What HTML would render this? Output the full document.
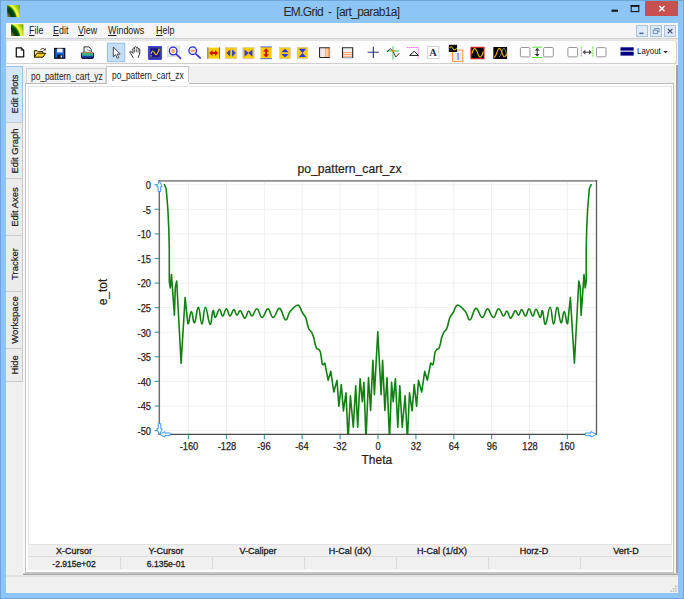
<!DOCTYPE html>
<html><head><meta charset="utf-8">
<style>
*{box-sizing:border-box;margin:0;padding:0}
html,body{width:684px;height:599px;overflow:hidden}
body{position:relative;background:#8dc6f6;font-family:"Liberation Sans",sans-serif;color:#1a1a1a}
.abs{position:absolute}
#frame{left:0;top:0;width:684px;height:599px;border:1px solid #6ea6d8}
#title{left:0;top:3.9px;width:683px;text-align:center;font-size:12px;line-height:16px;color:#262626;letter-spacing:-0.62px;word-spacing:2.2px}
#client{left:6px;top:23px;width:672px;height:570px;background:#f0f0f0}
#menubar{left:6px;top:23px;width:672px;height:16px;background:#f5f5f5}
.mi{position:absolute;top:24.2px;font-size:10.5px;line-height:13px;transform-origin:0 50%;white-space:nowrap;color:#1a1a1a}
.mi u{text-decoration:underline;text-underline-offset:0.6px;text-decoration-thickness:0.8px}
.mdi{position:absolute;top:25.2px;width:12.4px;height:12.2px;background:#dceaf9;border:1px solid #a9c4e0}
#tbsep{left:6px;top:38.3px;width:672px;height:2px;background:linear-gradient(#cfcfcf 60%,#e8e8e8 60%)}
#toolbar{left:6px;top:40.2px;width:671px;height:23.4px;background:#fdfdfd;border:1px solid #cfcfcf;border-top-color:#e4e4e4;border-left-color:#e8e8e8;border-radius:0 3px 3px 0}
.vt{position:absolute;left:6px;width:17px;background:#ececec;border:1px solid #c9c9c9;border-left:none}
.vt span{position:absolute;left:57%;top:50%;white-space:nowrap;font-size:9.5px;line-height:12px;transform:translate(-50%,-50%) rotate(-90deg);color:#1a1a1a;-webkit-text-stroke:0.2px #1a1a1a}
.vt.act{background:#d6e6f8;border-color:#9cc3ec}
.tab{position:absolute;font-size:10px;white-space:nowrap;color:#1a1a1a}
#tab1{left:26px;top:68px;width:80.3px;height:15.3px;background:#f2f2f2;border:1px solid #d2d2d2;border-bottom:none}
#tab2{left:106.3px;top:66.4px;width:83.2px;height:18px;background:#fff;border:1px solid #c8c8c8;border-bottom:none}
#panel{left:24.7px;top:83px;width:649.6px;height:490.3px;background:#fff;border:1px solid #c4c4c4;border-top-color:#bcbcbc}
#inner{left:28px;top:86px;width:644px;height:459px;border:1px solid #e3e3e3;background:#fff}
#tbl{left:28px;top:545px;width:644px;height:25px;background:#f0f0f0}
.th{position:absolute;top:545.5px;width:92px;text-align:center;font-size:9px;line-height:11px;color:#1a1a1a;-webkit-text-stroke:0.3px #1a1a1a}
.td{position:absolute;top:558.5px;width:92px;text-align:center;font-size:9px;line-height:11px;color:#1a1a1a;-webkit-text-stroke:0.3px #1a1a1a;transform:scaleX(0.945)}
.vs{position:absolute;top:557px;width:1px;height:12px;background:#dadada}
#rowsep{left:28px;top:556px;width:644px;height:1px;background:#dcdcdc}
#status{left:6px;top:575.3px;width:672px;height:17.5px;background:linear-gradient(#e3e3e3 0,#e3e3e3 1.6px,#f9f9f9 1.6px,#f9f9f9 2.4px,#f0f0f0 2.4px)}
.xl{position:absolute;top:440.3px;width:40px;text-align:center;font-size:10.5px;transform:scaleX(0.885);line-height:12px;color:#2a1c1c;-webkit-text-stroke:0.25px #2a1c1c}
.yl{position:absolute;left:110px;width:41px;text-align:right;font-size:10.5px;transform-origin:100% 50%;transform:scaleX(0.885);line-height:12px;color:#2a1c1c;-webkit-text-stroke:0.25px #2a1c1c}
#ctitle{left:249.5px;top:162px;width:200px;text-align:center;font-size:12.15px;line-height:15px;color:#2a1c14;-webkit-text-stroke:0.2px #2a1c14}
#xtitle{left:326.8px;top:453px;width:100px;text-align:center;font-size:12px;line-height:15px;color:#2a1c14;-webkit-text-stroke:0.2px #2a1c14}
#ytitle{left:103px;top:292px;font-size:12px;line-height:15px;white-space:nowrap;transform:translate(-50%,-50%) rotate(-90deg);color:#2a1c14;-webkit-text-stroke:0.2px #2a1c14}
</style></head>
<body>
<div id="frame" class="abs"></div>
<div id="title" class="abs">EM.Grid - [art_parab1a]</div>
<!--TITLEICONS-->
<div id="client" class="abs"></div>
<div id="menubar" class="abs"></div>
<div class="mi" style="left:28.7px;transform:scaleX(0.85)"><u>F</u>ile</div>
<div class="mi" style="left:52.9px;transform:scaleX(0.85)"><u>E</u>dit</div>
<div class="mi" style="left:78.4px;transform:scaleX(0.85)"><u>V</u>iew</div>
<div class="mi" style="left:108.2px;transform:scaleX(0.85)"><u>W</u>indows</div>
<div class="mi" style="left:155.6px;transform:scaleX(0.85)"><u>H</u>elp</div>
<div class="mdi" style="left:635.5px"></div>
<div class="mdi" style="left:649.7px"></div>
<div class="mdi" style="left:664px"></div>
<div id="tbsep" class="abs"></div>
<div class="abs" style="left:6px;top:64px;width:671px;height:1.6px;background:#fafafa"></div>
<div id="toolbar" class="abs"></div>
<svg class="abs" style="left:0;top:0" width="684" height="599" viewBox="0 0 684 599">
<defs>
<radialGradient id="lg" cx="0" cy="0" r="1" gradientTransform="translate(-0.3 1.3) scale(1.811 2.334)">
<stop offset="0.2" stop-color="#909048"/><stop offset="0.3" stop-color="#5a6a20"/><stop offset="0.38" stop-color="#0a400a"/><stop offset="0.46" stop-color="#053a05"/><stop offset="0.53" stop-color="#075507"/><stop offset="0.57" stop-color="#3a9a00"/><stop offset="0.61" stop-color="#f4f43a"/><stop offset="0.67" stop-color="#eef238"/><stop offset="0.74" stop-color="#a8da10"/><stop offset="0.85" stop-color="#80b000"/><stop offset="1" stop-color="#789f00"/>
</radialGradient>
</defs>
<!-- app icons -->
<rect x="7.2" y="5.1" width="12.8" height="12" fill="url(#lg)"/>
<rect x="11" y="24.2" width="12.5" height="11.8" fill="url(#lg)"/>
<!-- window buttons -->
<rect x="590" y="0" width="88" height="0" fill="none"/>
<rect x="645" y="1" width="33" height="15" fill="#c75050"/>
<path d="M659.3 6.1 l5.2 5.2 M664.5 6.1 l-5.2 5.2" stroke="#fff" stroke-width="1.4" fill="none"/>
<rect x="611.5" y="9.6" width="6.5" height="2.2" fill="#1a1a1a"/>
<rect x="631.2" y="5.6" width="7.6" height="6" fill="none" stroke="#1a1a1a" stroke-width="1.1"/>
<rect x="630.7" y="5.1" width="8.6" height="1.8" fill="#1a1a1a"/>
<!-- mdi glyphs -->
<rect x="639.3" y="32.6" width="4.2" height="1.5" fill="#4a6a92"/>
<rect x="654.8" y="28.4" width="4.2" height="3.4" fill="none" stroke="#6a86aa" stroke-width="0.8"/>
<rect x="653.2" y="30.2" width="4.2" height="3.4" fill="#dceaf9" stroke="#6a86aa" stroke-width="0.8"/>
<path d="M667.8 28.8 l4.6 4.6 M672.4 28.8 l-4.6 4.6" stroke="#3a4e6a" stroke-width="1.2" fill="none"/>

<!-- New -->
<path d="M16.3 47.8 h4.8 l2.6 2.6 v6.4 h-7.4 z" fill="#fff" stroke="#111" stroke-width="1.25" stroke-linejoin="round"/>
<path d="M21.2 47.7 v2.6 h2.6" fill="none" stroke="#1a1a1a" stroke-width="0.8"/>
<!-- Open -->
<path d="M34.4 57.2 v-6.6 h2.8 l1 1 h4.6 v1.6" fill="#fbe68a" stroke="#201800" stroke-width="1"/>
<path d="M34.4 57.2 l2.6 -4 h8.6 l-2.6 4 z" fill="#ffd21a" stroke="#201800" stroke-width="1"/>
<path d="M40.5 49.6 q1.8 -2 3.8 -0.6" fill="none" stroke="#1a1a1a" stroke-width="0.9"/>
<path d="M45.6 48 v2.4 h-2.4 z" fill="#1a1a1a"/>
<!-- Save -->
<rect x="54.7" y="48.5" width="10" height="9.7" fill="#1468e0" stroke="#06061c" stroke-width="1.2"/>
<rect x="57" y="48.6" width="5.6" height="3.8" fill="#f4f4f4"/>
<rect x="57.2" y="54.6" width="5.4" height="3.6" fill="#101030"/>
<rect x="60.6" y="55.4" width="1.4" height="2.2" fill="#f0f0f0"/>
<!-- Print -->
<path d="M84 52.5 v-5.6 h5 l2.2 2.2 v3.4 z" fill="#fff" stroke="#1a1a1a" stroke-width="0.9"/>
<path d="M86.5 49 l2 1.5 h2" fill="none" stroke="#666" stroke-width="0.7"/>
<rect x="81.4" y="52.3" width="12.2" height="6.2" rx="1.6" fill="#1a2a90" stroke="#0a0a30" stroke-width="0.9"/>
<rect x="82" y="52.2" width="11" height="0.9" fill="#e8a070"/>
<rect x="82" y="53.3" width="11" height="1.5" fill="#50e070"/>
<rect x="82" y="54.9" width="11" height="1.3" fill="#20a0a0"/>
<rect x="91.3" y="53.1" width="1" height="1" fill="#ff5050"/>
<!-- Pointer selected -->
<rect x="107.4" y="43.2" width="17.3" height="18.5" fill="#c5dff9" stroke="#90c0f0" stroke-width="1"/>
<path d="M113.3 47 v9.8 l2.3 -2.1 l1.7 3.6 l1.5 -0.7 l-1.7 -3.5 h3.1 z" fill="#fff" stroke="#3a3a3a" stroke-width="0.9" stroke-linejoin="round"/>
<!-- Hand -->
<path d="M133.3 57.8 l-1.6 -2.6 q-1.6 -2.2 -1.8 -3.4 q0.2 -1.2 1.4 -0.2 l1.6 1.8 v-4.6 q0.8 -1.6 1.6 0 v-1.4 q0.9 -1.6 1.8 0 v0.6 q0.9 -1.5 1.8 0 v1.2 q0.9 -1.3 1.7 0 v3.6 q-0.2 2 -1.2 3.4 l-0.4 1.6" fill="#fff" stroke="#1a1a1a" stroke-width="0.9" stroke-linejoin="round"/>
<path d="M134.5 52.5 v-3 M136.3 52.3 v-3.6 M138.1 52.5 v-3" stroke="#1a1a1a" stroke-width="0.7" fill="none"/>
<!-- Sine blue -->
<rect x="148.5" y="46.5" width="13" height="12.8" rx="0.8" fill="#14148c" stroke="#4646e6" stroke-width="1.2"/>
<rect x="149.9" y="47.9" width="10.2" height="10" fill="none" stroke="#8a8ab0" stroke-width="0.5"/>
<path d="M151 53.8 q1.6 -5 3.4 -1 t3.2 0 q0.8 -1.6 1.6 -3" fill="none" stroke="#f0c800" stroke-width="1.1"/>
<rect x="150.4" y="55.3" width="1.4" height="1.2" fill="#f0c800"/><rect x="158.3" y="48.8" width="1.4" height="1.2" fill="#f0c800"/>
<!-- Zoom in -->
<rect x="167.6" y="46" width="12.2" height="10.4" fill="#ececec" stroke="#d0d0d0" stroke-width="0.6"/>
<path d="M176 54 l4.6 4.4" stroke="#2a2ac8" stroke-width="1.5" stroke-linecap="round"/>
<circle cx="173.2" cy="51" r="3.8" fill="#fff" stroke="#2a2ad8" stroke-width="1.3"/>
<circle cx="173.2" cy="51" r="2" fill="#ff8a30"/>
<path d="M171.6 51 h3.2 M173.2 49.4 v3.2" stroke="#ffd0a0" stroke-width="0.7"/>
<!-- Zoom out -->
<path d="M195.6 53.8 l4.7 4.3" stroke="#2a2ac8" stroke-width="1.5" stroke-linecap="round"/>
<circle cx="192.7" cy="50.7" r="3.8" fill="#f4f0ec" stroke="#2a2ad8" stroke-width="1.3"/>
<rect x="190.6" y="49.9" width="4.2" height="1.8" fill="#ff9a40"/>
<!-- Y1 fit width -->
<rect x="207.6" y="47.6" width="12.2" height="11" fill="#ffcc00"/>
<path d="M207.8 47.3 v11.6 M219.6 47.3 v11.6" stroke="#4a5ae0" stroke-width="0.9"/>
<path d="M209.2 53.1 l3.2 -3 v2 h2.6 v-2 l3.2 3 l-3.2 3 v-2 h-2.6 v2 z" fill="#d01010"/>
<!-- Y2 expand H -->
<rect x="225.3" y="47.6" width="11.4" height="11" fill="#ffcc00" stroke="#c0c0b0" stroke-width="0.5"/>
<path d="M226.5 53.1 l3.7 -3.7 v7.4 z M235.7 53.1 l-3.6 -3.7 v7.4 z" fill="#2a3ae0"/>
<!-- Y3 compress H -->
<rect x="242.8" y="47.6" width="11.3" height="11" fill="#ffcc00" stroke="#c0c0b0" stroke-width="0.5"/>
<path d="M244.6 49.4 l4.1 3.7 l-4.1 3.7 z M252.4 49.4 l-4.1 3.7 l4.1 3.7 z" fill="#2a3ae0"/>
<!-- Y4 fit height -->
<rect x="260.6" y="46.9" width="11" height="11.8" fill="#ffcc00"/>
<path d="M260.3 46.9 h11.6 M260.3 58.7 h11.6" stroke="#4a5ae0" stroke-width="0.9"/>
<path d="M266.1 48.2 l3 3.2 h-2 v2.8 h2 l-3 3.2 l-3 -3.2 h2 v-2.8 h-2 z" fill="#d01010"/>
<!-- Y5 expand V -->
<rect x="279.7" y="47.6" width="10.7" height="11" fill="#ffcc00" stroke="#c0c0b0" stroke-width="0.5"/>
<path d="M285 48.8 l3.7 3.5 h-7.4 z M285 57.4 l3.7 -3.5 h-7.4 z" fill="#2a3ae0"/>
<!-- Y6 compress V -->
<rect x="297.3" y="47.4" width="10.5" height="11" fill="#ffcc00" stroke="#c0c0b0" stroke-width="0.5"/>
<path d="M298.8 48.8 h7.4 l-3.7 4.1 z M298.8 57 h7.4 l-3.7 -4.1 z" fill="#2a3ae0"/>
<!-- Grid V -->
<rect x="319.6" y="47.7" width="10" height="9.8" fill="#fff"/>
<path d="M321.6 48 v9 M323.4 48 v9" stroke="#d8d8d8" stroke-width="0.8"/>
<path d="M325.3 48 v9 M327 48 v9 M328.6 48 v9" stroke="#f0884a" stroke-width="0.9"/>
<path d="M319.6 57.6 v-9.9 h10.2 M319.6 57.5 h10.2" fill="none" stroke="#222" stroke-width="1.1"/>
<path d="M329.7 47.7 v9.9" stroke="#555" stroke-width="0.6"/>
<!-- Grid H -->
<rect x="342.5" y="47.7" width="10" height="9.8" fill="#fff"/>
<path d="M343 49.6 h9 M343 51 h9" stroke="#dcdcdc" stroke-width="0.7"/>
<path d="M343 52.6 h9 M343 54.4 h9 M343 56.2 h9" stroke="#f0884a" stroke-width="0.9"/>
<path d="M342.5 57.9 v-10.2 h10.2 v10.2" fill="none" stroke="#222" stroke-width="1.1"/><path d="M342.5 57.8 h10.2" stroke="#444" stroke-width="0.6"/>
<!-- Plus -->
<path d="M367.6 52.3 h11.3 M373.3 46.8 v11.2" stroke="#2a2a9a" stroke-width="1.1"/>
<!-- Cursor curve -->
<path d="M393 46.3 v13.5 M386.6 51 h12.3" stroke="#70d088" stroke-width="1.3"/>
<path d="M387.2 51.8 l3 -3.2 l2.8 2.6 l2.8 5.8 l3.6 -3.8" fill="none" stroke="#222" stroke-width="0.9"/>
<rect x="392" y="50.1" width="2" height="2" fill="#ff7a10"/>
<!-- Triangle -->
<path d="M406.8 47.5 h11.4 v11.1" fill="none" stroke="#ff70ff" stroke-width="1" stroke-dasharray="1.6 0.5"/>
<path d="M409.6 55.4 l4.6 -4.2 l4.2 4.2 z" fill="#fff" stroke="#1a1a1a" stroke-width="1"/>
<!-- A -->
<rect x="427.3" y="46.5" width="11.6" height="12.1" fill="#fff" stroke="#c4c4c4" stroke-width="0.7"/>
<text x="433.1" y="56.4" text-anchor="middle" font-family="Liberation Serif" font-weight="bold" font-size="10.5" fill="#2a2a5a">A</text>
<!-- copy sine -->
<rect x="452.6" y="50.1" width="10.2" height="11.3" fill="#f4f4f4" stroke="#ff9050" stroke-width="1"/>
<path d="M455 53 v7 M456.5 53 v7 M460 53 v7 M461.4 53 v7" stroke="#dcdcdc" stroke-width="0.6"/>
<rect x="457.4" y="53" width="1.5" height="7" fill="#8a8af0"/>
<rect x="448.8" y="44.8" width="8.3" height="7.2" fill="#0a0a0a"/>
<path d="M449.6 48 q1.2 -2.6 2.6 -0.6 q1.4 3.6 3.2 2.4 q0.8 -0.8 1.2 -2" fill="none" stroke="#f0c800" stroke-width="1"/>
<!-- red sine -->
<rect x="471" y="47.3" width="13" height="11.4" fill="#080808" stroke="#d42020" stroke-width="1.1"/>
<path d="M472 53.6 q1.6 -6.6 3.6 -4.4 q1.4 1.6 2.6 5.4 q1.8 4.4 3.6 1 q0.8 -1.8 1.4 -4" fill="none" stroke="#e8c400" stroke-width="1.1"/>
<!-- double sine -->
<rect x="493.3" y="47" width="13.8" height="12" fill="#080808"/>
<path d="M499 57 q1.6 -0.4 2.6 -4.4 q1.2 -5 2.6 -4.4 q1.6 1 2.6 8" fill="none" stroke="#a0a0a0" stroke-width="0.8"/>
<path d="M494 57.4 q1.6 -0.6 3 -5 q1.6 -5.4 3.2 -3.6 q1.2 1.4 2 4.4 q1.4 4.6 3 3.2 q0.8 -0.8 1.4 -2.4" fill="none" stroke="#e8b400" stroke-width="1.1"/>
<!-- checkboxes -->
<rect x="520.4" y="47.5" width="9.5" height="9.4" rx="1.2" fill="#fff" stroke="#8a8a8a" stroke-width="0.9"/>
<rect x="543.6" y="47.5" width="9.7" height="9.4" rx="1.2" fill="#fff" stroke="#8a8a8a" stroke-width="0.9"/>
<rect x="567.9" y="47.5" width="9.7" height="9.4" rx="1.2" fill="#fff" stroke="#8a8a8a" stroke-width="0.9"/>
<rect x="596.5" y="47.6" width="9.5" height="9.2" rx="1.2" fill="#fff" stroke="#8a8a8a" stroke-width="0.9"/>
<!-- v-arrows -->
<path d="M532.1 47.2 h9.9 M532.1 57.5 h9.9" stroke="#58e038" stroke-width="1"/>
<path d="M537.2 48.6 v7.4" stroke="#333" stroke-width="1"/>
<path d="M537.2 48 l2.4 2.6 h-4.8 z M537.2 56.6 l2.4 -2.6 h-4.8 z" fill="#333"/>
<!-- h-arrows -->
<path d="M581.3 46.6 v10 M592.9 46.6 v10" stroke="#60e040" stroke-width="1" stroke-dasharray="2.2 0.6"/>
<path d="M583.4 52.2 h7.6" stroke="#444" stroke-width="1"/>
<path d="M582.6 52.2 l2.8 -2.4 v4.8 z M591.8 52.2 l-2.8 -2.4 v4.8 z" fill="#444"/>
<!-- Layout -->
<rect x="620.5" y="47.3" width="13.2" height="3.3" fill="#000080"/>
<rect x="620.5" y="51.7" width="13.2" height="3.9" fill="#000080"/>
<path d="M663.4 51 h4.4 l-2.2 2.2 z" fill="#222"/>
</svg>
<div class="abs" style="left:636.8px;top:46.2px;font-size:8.5px;line-height:11px;white-space:nowrap;transform-origin:0 50%;transform:scaleX(0.93);color:#111">Layout</div>

<div class="vt act" style="top:66px;height:56.7px"><span style="transform:translate(-50%,-50%) rotate(-90deg) scaleX(0.971)">Edit Plots</span></div>
<div class="vt" style="top:122px;height:57.0px"><span style="transform:translate(-50%,-50%) rotate(-90deg) scaleX(0.993)">Edit Graph</span></div>
<div class="vt" style="top:178.3px;height:57.4px"><span style="transform:translate(-50%,-50%) rotate(-90deg) scaleX(0.998)">Edit Axes</span></div>
<div class="vt" style="top:235px;height:57.0px"><span style="transform:translate(-50%,-50%) rotate(-90deg) scaleX(1.000)">Tracker</span></div>
<div class="vt" style="top:291.3px;height:57.7px"><span style="transform:translate(-50%,-50%) rotate(-90deg) scaleX(1.000)">Workspace</span></div>
<div class="vt" style="top:348.3px;height:34.1px"><span style="transform:translate(-50%,-50%) rotate(-90deg) scaleX(0.978)">Hide</span></div>
<div id="tab1" class="tab"></div>
<div id="tab2" class="tab"></div>
<div class="abs" style="left:23.3px;top:83px;width:1.4px;height:492px;background:#f9f9f9"></div>
<div class="abs" style="left:674.7px;top:66px;width:1.6px;height:508px;background:#f8f8f8"></div>
<div class="abs" style="left:676.3px;top:64.5px;width:1.4px;height:511px;background:#a2a2a2"></div>
<div class="abs" style="left:23.3px;top:573.3px;width:654.4px;height:2.4px;background:linear-gradient(#d4d4d4,#a8a8a8 45%,#a8a8a8)"></div>
<div id="panel" class="abs"></div>
<div id="tab2b" class="abs" style="left:107px;top:82px;width:82px;height:3px;background:#fff"></div>
<div class="tab" style="left:30.6px;top:71px;line-height:11px;transform-origin:0 50%;transform:scaleX(0.836)">po_pattern_cart_yz</div>
<div class="tab" style="left:112px;top:69.5px;line-height:11px;transform-origin:0 50%;transform:scaleX(0.836)">po_pattern_cart_zx</div>
<div id="inner" class="abs"></div>
<div id="tbl" class="abs"></div>
<div id="rowsep" class="abs"></div>
<div class="th" style="left:28px">X-Cursor</div>
<div class="td" style="left:28px">-2.915e+02</div>
<div class="th" style="left:120px">Y-Cursor</div>
<div class="td" style="left:120px">6.135e-01</div>
<div class="vs" style="left:120px"></div>
<div class="th" style="left:212px">V-Caliper</div>
<div class="vs" style="left:212px"></div>
<div class="th" style="left:304px">H-Cal (dX)</div>
<div class="vs" style="left:304px"></div>
<div class="th" style="left:396px">H-Cal (1/dX)</div>
<div class="vs" style="left:396px"></div>
<div class="th" style="left:488px">Horz-D</div>
<div class="vs" style="left:488px"></div>
<div class="th" style="left:580px">Vert-D</div>
<div class="vs" style="left:580px"></div>
<div id="status" class="abs"></div>
<svg class="abs" style="left:668px;top:583px" width="10" height="10" viewBox="668 583 10 10"><rect x="675.2" y="585.6" width="1.4" height="1.4" fill="#b4b4b4"/><rect x="672.8" y="588" width="1.4" height="1.4" fill="#b4b4b4"/><rect x="675.2" y="588" width="1.4" height="1.4" fill="#b4b4b4"/><rect x="670.4" y="590.4" width="1.4" height="1.4" fill="#b4b4b4"/><rect x="672.8" y="590.4" width="1.4" height="1.4" fill="#b4b4b4"/><rect x="675.2" y="590.4" width="1.4" height="1.4" fill="#b4b4b4"/></svg>
<svg style="position:absolute;left:0;top:0" width="684" height="599" viewBox="0 0 684 599">
<line x1="188.6" y1="181.0" x2="188.6" y2="434.0" stroke="#f0f0f0" stroke-width="1"/>
<line x1="226.5" y1="181.0" x2="226.5" y2="434.0" stroke="#f0f0f0" stroke-width="1"/>
<line x1="264.4" y1="181.0" x2="264.4" y2="434.0" stroke="#f0f0f0" stroke-width="1"/>
<line x1="302.2" y1="181.0" x2="302.2" y2="434.0" stroke="#f0f0f0" stroke-width="1"/>
<line x1="340.1" y1="181.0" x2="340.1" y2="434.0" stroke="#f0f0f0" stroke-width="1"/>
<line x1="378.0" y1="181.0" x2="378.0" y2="434.0" stroke="#f0f0f0" stroke-width="1"/>
<line x1="415.9" y1="181.0" x2="415.9" y2="434.0" stroke="#f0f0f0" stroke-width="1"/>
<line x1="453.8" y1="181.0" x2="453.8" y2="434.0" stroke="#f0f0f0" stroke-width="1"/>
<line x1="491.6" y1="181.0" x2="491.6" y2="434.0" stroke="#f0f0f0" stroke-width="1"/>
<line x1="529.5" y1="181.0" x2="529.5" y2="434.0" stroke="#f0f0f0" stroke-width="1"/>
<line x1="567.4" y1="181.0" x2="567.4" y2="434.0" stroke="#f0f0f0" stroke-width="1"/>
<line x1="159.5" y1="184.7" x2="596.5" y2="184.7" stroke="#f0f0f0" stroke-width="1"/>
<line x1="159.5" y1="209.3" x2="596.5" y2="209.3" stroke="#f0f0f0" stroke-width="1"/>
<line x1="159.5" y1="233.9" x2="596.5" y2="233.9" stroke="#f0f0f0" stroke-width="1"/>
<line x1="159.5" y1="258.5" x2="596.5" y2="258.5" stroke="#f0f0f0" stroke-width="1"/>
<line x1="159.5" y1="283.1" x2="596.5" y2="283.1" stroke="#f0f0f0" stroke-width="1"/>
<line x1="159.5" y1="307.6" x2="596.5" y2="307.6" stroke="#f0f0f0" stroke-width="1"/>
<line x1="159.5" y1="332.2" x2="596.5" y2="332.2" stroke="#f0f0f0" stroke-width="1"/>
<line x1="159.5" y1="356.8" x2="596.5" y2="356.8" stroke="#f0f0f0" stroke-width="1"/>
<line x1="159.5" y1="381.4" x2="596.5" y2="381.4" stroke="#f0f0f0" stroke-width="1"/>
<line x1="159.5" y1="406.0" x2="596.5" y2="406.0" stroke="#f0f0f0" stroke-width="1"/>
<line x1="159.5" y1="430.6" x2="596.5" y2="430.6" stroke="#f0f0f0" stroke-width="1"/>
<line x1="188.6" y1="434.0" x2="188.6" y2="439.2" stroke="#45a3a3" stroke-width="1.2"/>
<line x1="226.5" y1="434.0" x2="226.5" y2="439.2" stroke="#45a3a3" stroke-width="1.2"/>
<line x1="264.4" y1="434.0" x2="264.4" y2="439.2" stroke="#45a3a3" stroke-width="1.2"/>
<line x1="302.2" y1="434.0" x2="302.2" y2="439.2" stroke="#45a3a3" stroke-width="1.2"/>
<line x1="340.1" y1="434.0" x2="340.1" y2="439.2" stroke="#45a3a3" stroke-width="1.2"/>
<line x1="378.0" y1="434.0" x2="378.0" y2="439.2" stroke="#45a3a3" stroke-width="1.2"/>
<line x1="415.9" y1="434.0" x2="415.9" y2="439.2" stroke="#45a3a3" stroke-width="1.2"/>
<line x1="453.8" y1="434.0" x2="453.8" y2="439.2" stroke="#45a3a3" stroke-width="1.2"/>
<line x1="491.6" y1="434.0" x2="491.6" y2="439.2" stroke="#45a3a3" stroke-width="1.2"/>
<line x1="529.5" y1="434.0" x2="529.5" y2="439.2" stroke="#45a3a3" stroke-width="1.2"/>
<line x1="567.4" y1="434.0" x2="567.4" y2="439.2" stroke="#45a3a3" stroke-width="1.2"/>
<line x1="154.5" y1="184.7" x2="159.5" y2="184.7" stroke="#45a3a3" stroke-width="1.2"/>
<line x1="154.5" y1="209.3" x2="159.5" y2="209.3" stroke="#45a3a3" stroke-width="1.2"/>
<line x1="154.5" y1="233.9" x2="159.5" y2="233.9" stroke="#45a3a3" stroke-width="1.2"/>
<line x1="154.5" y1="258.5" x2="159.5" y2="258.5" stroke="#45a3a3" stroke-width="1.2"/>
<line x1="154.5" y1="283.1" x2="159.5" y2="283.1" stroke="#45a3a3" stroke-width="1.2"/>
<line x1="154.5" y1="307.6" x2="159.5" y2="307.6" stroke="#45a3a3" stroke-width="1.2"/>
<line x1="154.5" y1="332.2" x2="159.5" y2="332.2" stroke="#45a3a3" stroke-width="1.2"/>
<line x1="154.5" y1="356.8" x2="159.5" y2="356.8" stroke="#45a3a3" stroke-width="1.2"/>
<line x1="154.5" y1="381.4" x2="159.5" y2="381.4" stroke="#45a3a3" stroke-width="1.2"/>
<line x1="154.5" y1="406.0" x2="159.5" y2="406.0" stroke="#45a3a3" stroke-width="1.2"/>
<line x1="154.5" y1="430.6" x2="159.5" y2="430.6" stroke="#45a3a3" stroke-width="1.2"/>
<clipPath id="pc"><rect x="159.5" y="181.0" width="437.0" height="253.0"/></clipPath>
<path clip-path="url(#pc)" d="M164.4 184.7L166.2 188.8L167.9 209.8L168.8 229.1L169.3 250.0L169.3 281.6L170.3 288.0L171.5 274.6L174.4 315.1L175.3 287.0L176.7 281.0L181.1 363.3L185.1 297.6L187.8 323.3C189.2 326.4 189.8 311.7 191.3 311.6C192.8 311.5 192.9 323.6 194.5 322.7C196.1 321.8 196.8 307.0 198.4 307.3C200.0 307.6 200.4 324.2 201.9 324.2C203.4 324.2 203.6 307.3 205.4 307.3C207.2 307.3 208.3 323.4 210.0 324.2C211.7 325.0 211.8 312.3 213.0 310.8C214.2 309.3 213.9 317.8 215.3 317.5C216.7 317.2 217.8 309.6 219.4 309.3C221.0 309.0 221.2 316.1 222.7 316.0C224.2 315.9 224.8 308.7 226.4 308.7C228.0 308.7 228.3 315.8 229.9 316.0C231.5 316.2 232.3 309.8 233.8 309.6C235.3 309.4 235.4 314.8 236.9 315.1C238.4 315.4 238.7 310.1 240.4 310.8C242.1 311.5 243.0 318.0 244.8 318.1C246.6 318.2 247.0 311.6 248.6 311.1C250.2 310.6 250.3 316.5 252.1 316.0C253.9 315.5 254.8 308.4 257.0 308.7C259.2 309.0 259.7 317.5 262.1 317.5C264.5 317.5 265.5 308.9 267.9 308.9C270.3 308.9 270.6 317.6 273.2 317.5C275.8 317.4 276.9 307.9 279.6 308.4C282.3 308.9 283.2 319.1 285.5 319.8C287.8 320.5 287.5 314.8 290.1 311.6C292.7 308.4 295.1 305.8 297.4 305.2C299.7 304.6 299.7 307.3 300.7 308.7C301.7 310.1 300.8 309.8 301.8 311.6C302.8 313.4 304.3 315.1 305.3 316.9C306.3 318.7 305.6 317.4 306.4 320.0C307.2 322.6 307.6 326.1 308.8 328.8C310.0 331.5 310.6 330.3 311.7 332.3L314.0 338.1L315.2 344.6L316.7 348.7L318.7 349.2L320.5 352.2L322.2 363.9L323.0 364.8L324.8 363.0L328.1 380.2L330.8 371.4L333.8 392.0L337.0 380.4L338.9 406.3L341.3 384.5L343.4 410.9L346.0 392.8L348.1 440.0L350.4 395.7L353.3 427.3L355.7 385.9L357.7 427.1L360.1 378.7L362.3 401.6L363.9 382.2L366.0 440.0L368.5 377.5L370.6 410.4L372.9 360.4L374.4 394.6L377.8 331.7L381.1 394.6L382.6 360.4L384.9 410.4L387.0 377.5L389.5 440.0L391.6 382.2L393.2 401.6L395.4 378.7L397.8 427.1L399.8 385.9L402.2 427.3L405.1 395.7L407.4 440.0L409.5 392.8L412.1 410.9L414.2 384.5L416.6 406.3L418.5 380.4L421.7 392.0L424.7 371.4L427.4 380.2L430.7 363.0L432.5 364.8L433.3 363.9L435.0 352.2L436.8 349.2L438.8 348.7L440.3 344.6L441.5 338.1L443.8 332.3C444.9 330.3 445.5 331.5 446.7 328.8C447.9 326.1 448.3 322.6 449.1 320.0C449.9 317.4 449.2 318.7 450.2 316.9C451.2 315.1 452.7 313.4 453.7 311.6C454.7 309.8 453.8 310.1 454.8 308.7C455.8 307.3 455.8 304.6 458.1 305.2C460.4 305.8 462.8 308.4 465.4 311.6C468.0 314.8 467.7 320.5 470.0 319.8C472.3 319.1 473.2 308.9 475.9 308.4C478.6 307.9 479.7 317.4 482.3 317.5C484.9 317.6 485.2 308.9 487.6 308.9C490.0 308.9 491.0 317.5 493.4 317.5C495.8 317.5 496.3 309.0 498.5 308.7C500.7 308.4 501.6 315.5 503.4 316.0C505.2 316.5 505.3 310.6 506.9 311.1C508.5 311.6 508.9 318.2 510.7 318.1C512.5 318.0 513.4 311.5 515.1 310.8C516.8 310.1 517.1 315.4 518.6 315.1C520.1 314.8 520.2 309.4 521.7 309.6C523.2 309.8 524.0 316.2 525.6 316.0C527.2 315.8 527.5 308.7 529.1 308.7C530.7 308.7 531.3 315.9 532.8 316.0C534.3 316.1 534.5 309.0 536.1 309.3C537.7 309.6 538.8 317.2 540.2 317.5C541.6 317.8 541.3 309.3 542.5 310.8C543.7 312.3 543.8 325.0 545.5 324.2C547.2 323.4 548.3 307.3 550.1 307.3C551.9 307.3 552.1 324.2 553.6 324.2C555.1 324.2 555.5 307.6 557.1 307.3C558.7 307.0 559.4 321.8 561.0 322.7C562.6 323.6 562.7 311.5 564.2 311.6C565.7 311.7 566.3 326.4 567.7 323.3L570.4 297.6L574.4 363.3L578.8 281.0L580.2 287.0L581.1 315.1L584.0 274.6L585.2 288.0L586.2 281.6L586.2 250.0L586.7 229.1L587.6 209.8L589.3 188.8L591.1 184.7" fill="none" stroke="#138013" stroke-width="1.6" stroke-linejoin="round" stroke-linecap="round"/>
<line x1="158.6" y1="180.9" x2="597.1" y2="180.9" stroke="#8e8e8e" stroke-width="1.9"/>
<line x1="596.5" y1="180" x2="596.5" y2="435" stroke="#5a5a5a" stroke-width="1.3"/>
<line x1="159.3" y1="180" x2="159.3" y2="435" stroke="#6e6e6e" stroke-width="1.5"/>
<line x1="158.6" y1="434.4" x2="597.1" y2="434.4" stroke="#4a4a4a" stroke-width="1.3"/>
<path d="M159.4 181.3 L162.2 186.6 L160.7 186.6 L160.7 191.6 L158.1 191.6 L158.1 186.6 L156.6 186.6 Z" fill="#fffdf8" stroke="#3c96f8" stroke-width="1" stroke-linejoin="round"/>
<path d="M159.5 434.2 L156.7 428.8 L158.2 428.8 L158.2 423.6 L160.8 423.6 L160.8 428.8 L162.3 428.8 Z" fill="#fffdf8" stroke="#3c96f8" stroke-width="1" stroke-linejoin="round"/>
<path d="M159.5 434.3 L164.8 431.6 L164.8 433 L170.2 433 L170.2 435.6 L164.8 435.6 L164.8 437.1 Z" fill="#fffdf8" stroke="#3c96f8" stroke-width="1" stroke-linejoin="round"/>
<path d="M596.4 434.3 L590.9 431.5 L590.9 433 L585.3 433 L585.3 435.7 L590.9 435.7 L590.9 437.2 Z" fill="#fffdf8" stroke="#3c96f8" stroke-width="1" stroke-linejoin="round"/>
</svg>
<div class="xl" style="left:168.6px">-160</div>
<div class="xl" style="left:206.5px">-128</div>
<div class="xl" style="left:244.4px">-96</div>
<div class="xl" style="left:282.2px">-64</div>
<div class="xl" style="left:320.1px">-32</div>
<div class="xl" style="left:358.0px">0</div>
<div class="xl" style="left:395.9px">32</div>
<div class="xl" style="left:433.8px">64</div>
<div class="xl" style="left:471.6px">96</div>
<div class="xl" style="left:509.5px">128</div>
<div class="xl" style="left:547.4px">160</div>
<div class="yl" style="top:179.0px">0</div>
<div class="yl" style="top:203.6px">-5</div>
<div class="yl" style="top:228.2px">-10</div>
<div class="yl" style="top:252.8px">-15</div>
<div class="yl" style="top:277.4px">-20</div>
<div class="yl" style="top:301.9px">-25</div>
<div class="yl" style="top:326.5px">-30</div>
<div class="yl" style="top:351.1px">-35</div>
<div class="yl" style="top:375.7px">-40</div>
<div class="yl" style="top:400.3px">-45</div>
<div class="yl" style="top:424.9px">-50</div>
<div id="ctitle" class="abs">po_pattern_cart_zx</div>
<div id="xtitle" class="abs">Theta</div>
<div id="ytitle" class="abs">e_tot</div>
</body></html>
